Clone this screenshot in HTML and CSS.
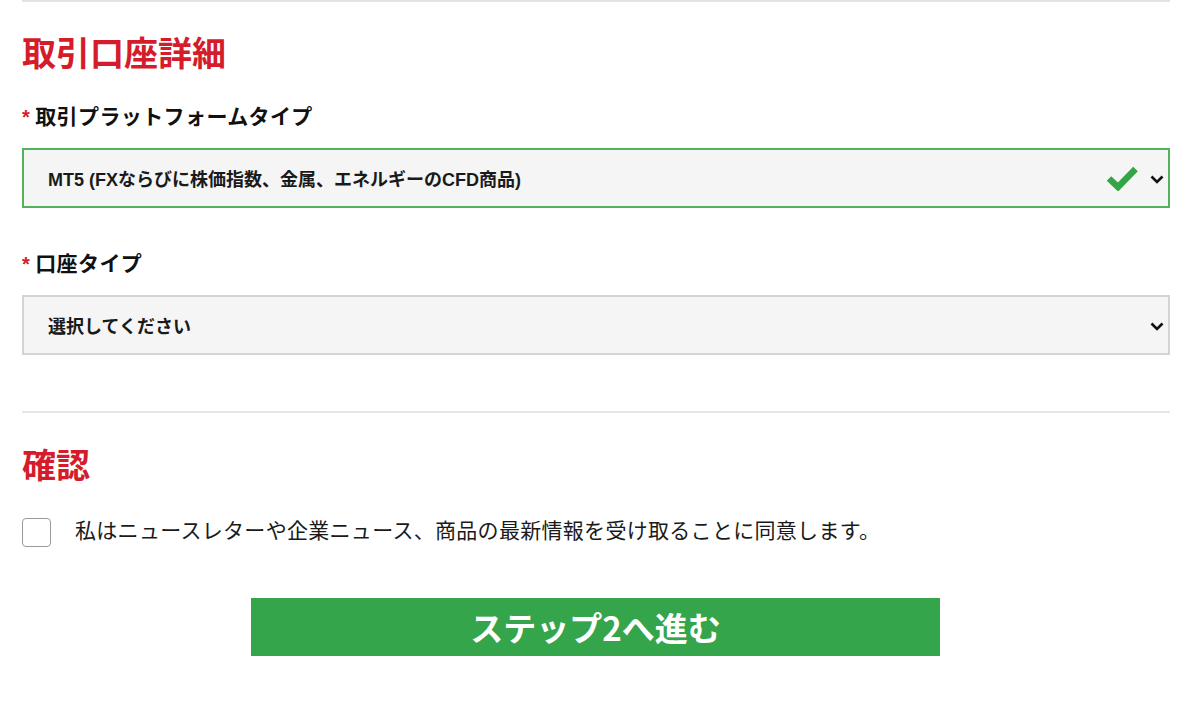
FILE: index.html
```html
<!DOCTYPE html>
<html lang="ja">
<head>
<meta charset="utf-8">
<title>取引口座詳細</title>
<link rel="stylesheet" href="styles.css">
</head>
<body>
<div class="page">
  <div class="topline"></div>
  <h2 class="heading">取引口座詳細</h2>

  <div class="label"><span class="req">*</span>取引プラットフォームタイプ</div>
  <div class="select valid">
    <span class="select-text">MT5 (FXならびに株価指数、金属、エネルギーのCFD商品)</span>
    <svg class="check" width="32" height="26" viewBox="0 0 32 26"><polyline points="3,13.5 12,22 29.5,4" fill="none" stroke="#33a547" stroke-width="6.5"/></svg>
    <svg class="chev" width="14" height="9" viewBox="0 0 14 9"><polyline points="1.5,1.5 7,7 12.5,1.5" fill="none" stroke="#111" stroke-width="2.6"/></svg>
  </div>

  <div class="label label2"><span class="req">*</span>口座タイプ</div>
  <div class="select plain">
    <span class="select-text">選択してください</span>
    <svg class="chev" width="14" height="9" viewBox="0 0 14 9"><polyline points="1.5,1.5 7,7 12.5,1.5" fill="none" stroke="#111" stroke-width="2.6"/></svg>
  </div>

  <div class="divider"></div>
  <h2 class="heading heading2">確認</h2>

  <div class="agree">
    <span class="box"></span>
    <span class="agree-text">私はニュースレターや企業ニュース、商品の最新情報を受け取ることに同意します。</span>
  </div>

  <div class="btn-row">
    <button class="btn">ステップ2へ進む</button>
  </div>
</div>
</body>
</html>
```

FILE: styles.css
```css
html, body {
  margin: 0;
  padding: 0;
  background: #ffffff;
}
body {
  font-family: "Liberation Sans", "Noto Sans CJK JP", sans-serif;
  color: #111;
}
.page {
  margin-left: 22px;
  width: 1148px;
}
.topline {
  height: 2px;
  background: #e3e3e3;
}
.heading {
  margin: 30px 0 0;
  font-size: 34px;
  line-height: 40px;
  font-weight: 700;
  color: #d51c2b;
  font-family: "Noto Sans CJK JP", sans-serif;
}
.label {
  margin-top: 28px;
  height: 30px;
  font-size: 21px;
  line-height: 30px;
  letter-spacing: 0.4px;
  font-weight: 700;
  color: #111;
  font-family: "Noto Sans CJK JP", sans-serif;
}
.label2 {
  margin-top: 39px;
}
.req {
  color: #d51c2b;
  font-family: "Liberation Sans", sans-serif;
  font-size: 20px;
  margin-right: 5px;
}
.select {
  margin-top: 18px;
  box-sizing: border-box;
  height: 60px;
  background: #f5f5f5;
  display: flex;
  align-items: center;
  padding: 0 4px 0 24px;
}
.select.valid {
  border: 2px solid #52b35c;
}
.select.plain {
  border: 2px solid #d4d4d4;
}
.select-text {
  flex: 1;
  font-size: 18px;
  font-weight: 700;
  color: #1a1a1a;
}
.check {
  margin-right: 12px;
}
.chev {
  margin-top: 2px;
}
.divider {
  margin-top: 56px;
  height: 2px;
  background: #e6e6e6;
}
.heading2 {
  margin-top: 31px;
}
.agree {
  margin-top: 34px;
  display: flex;
  align-items: flex-start;
}
.box {
  box-sizing: border-box;
  width: 29px;
  height: 29px;
  border: 1.5px solid #9a9a9a;
  border-radius: 4px;
  background: #fff;
  flex-shrink: 0;
}
.agree-text {
  margin-left: 24px;
  font-size: 21px;
  line-height: 22px;
  letter-spacing: 0.3px;
  color: #1a1a1a;
  font-family: "Noto Sans CJK JP", sans-serif;
}
.btn-row {
  margin-top: 51px;
  display: flex;
  justify-content: center;
}
.btn {
  width: 689px;
  height: 58px;
  border: none;
  background: #34a54a;
  color: #fff;
  font-family: "Noto Sans CJK JP", sans-serif;
  font-size: 33px;
  font-weight: 700;
  line-height: 58px;
  padding: 0;
  margin-right: 1px;
}
```
